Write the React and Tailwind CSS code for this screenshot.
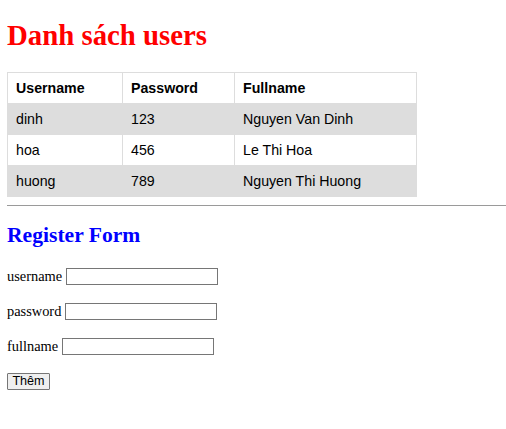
import React from 'react';

const users = [
  { username: 'dinh', password: '123', fullname: 'Nguyen Van Dinh' },
  { username: 'hoa', password: '456', fullname: 'Le Thi Hoa' },
  { username: 'huong', password: '789', fullname: 'Nguyen Thi Huong' },
];

const App = () => {
  return (
    <div className="min-h-[429px] bg-white pl-[7px] text-black font-['Liberation_Serif',serif]">
      <h1 className="mt-[19px] mb-[20px] text-[28.8px] leading-[33px] font-bold text-[#ff0000]">
        Danh sách users
      </h1>

      {/* Users table */}
      <table className="table-fixed border-collapse w-[410px] text-[14.2px] leading-[16px] font-['Liberation_Sans',Arial,sans-serif]">
        <thead>
          <tr className="bg-white">
            <th className="w-[115px] border border-[#dddddd] px-[8px] py-[7px] text-left font-bold">Username</th>
            <th className="w-[112px] border border-[#dddddd] px-[8px] py-[7px] text-left font-bold">Password</th>
            <th className="border border-[#dddddd] px-[8px] py-[7px] text-left font-bold">Fullname</th>
          </tr>
        </thead>
        <tbody>
          {users.map((u, i) => (
            <tr key={u.username} className={i % 2 === 0 ? 'bg-[#dddddd]' : 'bg-white'}>
              <td className="border border-[#dddddd] px-[8px] py-[7px]">{u.username}</td>
              <td className="border border-[#dddddd] px-[8px] py-[7px]">{u.password}</td>
              <td className="border border-[#dddddd] px-[8px] py-[7px]">{u.fullname}</td>
            </tr>
          ))}
        </tbody>
      </table>

      <div className="mt-[8px] h-px bg-[#9a9a9a]" />

      <h2 className="mt-[17px] text-[21.6px] leading-[25px] font-bold text-[#0000ff]">Register Form</h2>

      {/* Register form */}
      <form className="mt-[20px] flex flex-col gap-[18px] text-[14.4px]">
        <div className="flex h-[17px] items-center">
          <label>username</label>
          <input className="ml-[4px] h-[17px] w-[152px] border border-[#767676] bg-white" />
        </div>
        <div className="flex h-[17px] items-center">
          <label>password</label>
          <input type="password" className="ml-[4px] h-[17px] w-[152px] border border-[#767676] bg-white" />
        </div>
        <div className="flex h-[17px] items-center">
          <label>fullname</label>
          <input className="ml-[4px] h-[17px] w-[152px] border border-[#767676] bg-white" />
        </div>
        <div className="flex h-[17px] items-center">
          <button
            type="button"
            className="flex h-[17px] w-[43px] items-center justify-center rounded-[1px] border border-[#767676] bg-[#efefef] text-[12.6px] font-['Liberation_Sans',Arial,sans-serif]"
          >
            Thêm
          </button>
        </div>
      </form>
    </div>
  );
};

export default App;
